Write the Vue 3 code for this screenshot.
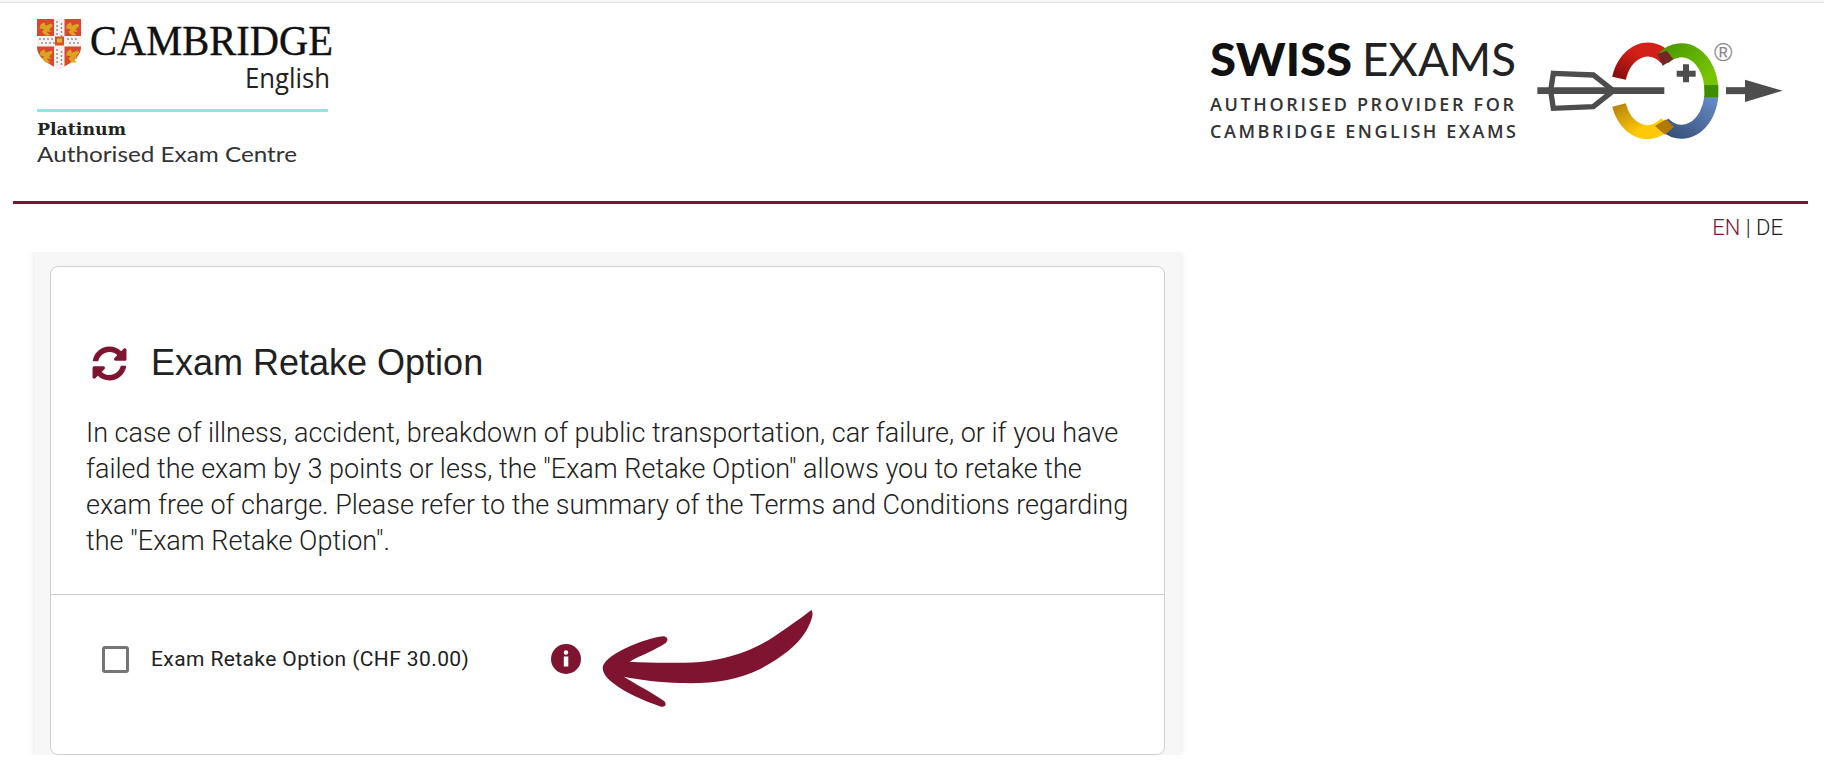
<script setup>
const refreshPath = "M370.72 133.28C339.458 104.008 298.888 87.962 255.848 88c-77.458.068-144.328 53.178-162.791 126.85-1.344 5.363-6.122 9.15-11.651 9.15H24.103c-7.498 0-13.194-6.807-11.807-14.176C33.933 94.924 134.813 8 256 8c66.448 0 126.791 26.136 171.315 68.685L463.03 40.97C478.149 25.851 504 36.559 504 57.941V192c0 13.255-10.745 24-24 24H345.941c-21.382 0-32.09-25.851-16.971-40.971l41.75-41.749zM32 296h134.059c21.382 0 32.09 25.851 16.971 40.971l-41.75 41.75c31.262 29.273 71.835 45.319 114.876 45.28 77.418-.07 144.315-53.144 162.787-126.849 1.344-5.363 6.122-9.15 11.651-9.15h57.304c7.498 0 13.194 6.807 11.807 14.176C478.067 417.076 377.187 504 256 504c-66.448 0-126.791-26.136-171.315-68.685L48.97 471.03C33.851 486.149 8 475.441 8 454.059V320c0-13.255 10.745-24 24-24z";
const lions = [[39.5, 21], [66, 21], [39.5, 48], [66, 48]];
const dots = [];
for (let y = 22; y < 64; y += 4) { if (y < 36 || y > 46) { dots.push([57, y]); dots.push([61.5, y + 2]); } }
for (let x = 40; x < 80; x += 4) { if (x < 54 || x > 64) { dots.push([x, 39]); dots.push([x + 2, 43]); } }
</script>

<template>
  <div class="page">
    <div class="topline"></div>
    <header class="header">
      <svg class="logo-left" viewBox="37 19 300 146" width="300" height="146">
        <path d="M37 19H81V47C81 58 68 65 59 69C50 65 37 58 37 47Z" fill="#d9482e" />
        <path d="M54 19H64.500V36H81V46.500H64.500V68L59 69L54 68V46.500H37V36H54Z" fill="#f4f1ee" />
        <circle v-for="(d, i) in dots" :key="i" :cx="d[0]" :cy="d[1]" r="0.9" fill="#8b8b8b" />
        <rect x="55" y="36.500" width="9" height="9" fill="#d7512b" />
        <rect x="57" y="38.500" width="5" height="4" fill="#e3b02a" />
        <g v-for="(l, i) in lions" :key="i" :transform="`translate(${l[0]} ${l[1]}) scale(1.2)`">
          <path d="M1 3L4 1L5 4L10 2L11 4L8 7L10 9L6 9L9 12L5 12L2 9L4 7L0 6Z" fill="#dba520" />
        </g>
        <text x="90" y="55" class="cam" textLength="243" lengthAdjust="spacingAndGlyphs">CAMBRIDGE</text>
        <text x="245" y="88" class="eng" textLength="85" lengthAdjust="spacingAndGlyphs">English</text>
        <rect x="37" y="109" width="291" height="3" fill="#8fe6e2" />
        <text x="37" y="135" class="plat" textLength="89" lengthAdjust="spacingAndGlyphs">Platinum</text>
        <text x="37" y="162" class="auth" textLength="260" lengthAdjust="spacingAndGlyphs">Authorised Exam Centre</text>
      </svg>
      <svg class="logo-right" viewBox="1210 40 580 105" width="580" height="105">
        <text x="1210" y="76" class="swiss" textLength="142" lengthAdjust="spacingAndGlyphs">SWISS</text>
        <text x="1362" y="76" class="exams" textLength="154" lengthAdjust="spacingAndGlyphs">EXAMS</text>
        <text x="1210" y="111" class="prov" textLength="304">AUTHORISED PROVIDER FOR</text>
        <text x="1210" y="138" class="prov" textLength="306">CAMBRIDGE ENGLISH EXAMS</text>
        <defs>
          <linearGradient id="gr" x1="0" y1="1" x2="1" y2="0"><stop offset="0" stop-color="#870e0e" /><stop offset="0.6" stop-color="#d21f17" /></linearGradient>
          <linearGradient id="gy" x1="0" y1="0" x2="1" y2="1"><stop offset="0" stop-color="#b9860f" /><stop offset="0.7" stop-color="#ffc905" /></linearGradient>
          <linearGradient id="gg" x1="0" y1="0" x2="1" y2="1"><stop offset="0" stop-color="#4c9b00" /><stop offset="0.8" stop-color="#77c502" /></linearGradient>
          <linearGradient id="gb" x1="1" y1="0" x2="0" y2="1"><stop offset="0" stop-color="#668ac5" /><stop offset="1" stop-color="#365078" /></linearGradient>
        </defs>
        <g transform="translate(1520 30) scale(0.33333)" fill="none">
          <path d="M297 145A90 121 0 0 1 439 85" stroke="url(#gr)" stroke-width="42" />
          <path d="M430 85A90 121 0 0 1 574 182" stroke="url(#gg)" stroke-width="42" />
          <path d="M297 225A90 121 0 0 0 439 279" stroke="url(#gy)" stroke-width="42" />
          <path d="M574 200A90 121 0 0 1 430 280" stroke="url(#gb)" stroke-width="42" />
          <path d="M412 73L440 62L460 88L428 107Z" fill="#742528" />
          <path d="M405 288L438 268L462 290L435 314Z" fill="#b27a04" />
          <rect x="553" y="165" width="42" height="37" fill="#3f8c00" />
          <path d="M100 130L220 135L280 182L220 230L100 235L92 182Z" stroke="#4d4d4d" stroke-width="16" />
          <path d="M52 182H433" stroke="#4d4d4d" stroke-width="20" />
          <path d="M470 131H527M498 103V157" stroke="#4d4d4d" stroke-width="18" />
          <path d="M618 182H690" stroke="#4d4d4d" stroke-width="21" />
          <path d="M675 149L788 182L675 216Z" fill="#4d4d4d" />
        </g>
        <text x="1714" y="61" class="reg">®</text>
      </svg>
    </header>
    <div class="rule"></div>
    <nav class="lang"><span class="active">EN</span> | DE</nav>
    <main class="panel">
      <section class="card">
        <div class="intro">
          <h2 class="title">
            <svg class="sync" viewBox="0 0 512 512" width="35" height="35"><path :d="refreshPath" fill="#7f1431" /></svg>
            <span>Exam Retake Option</span>
          </h2>
          <p class="desc">In case of illness, accident, breakdown of public transportation, car failure, or if you have failed the exam by 3 points or less, the "Exam Retake Option" allows you to retake the exam free of charge. Please refer to the summary of the Terms and Conditions regarding the "Exam Retake Option".</p>
        </div>
        <div class="option">
          <span class="check"></span>
          <span class="label">Exam Retake Option (CHF 30.00)</span>
          <span class="info-wrap">
            <svg class="info" viewBox="0 0 30 30" width="30" height="30">
              <circle cx="15" cy="15" r="15" fill="#7f1431" />
              <circle cx="15" cy="8.500" r="2.200" fill="#fff" />
              <rect x="12.800" y="12.500" width="4.500" height="10" fill="#fff" />
            </svg>
            <svg class="arrow" viewBox="200 10 660 320" width="220" height="106.670">
              <path d="M843 28C850 35 848 55 825 95C800 135 755 170 690 205C620 240 540 250 450 247C390 245 330 238 280 228C315 250 370 278 402 302C410 312 405 320 392 318C340 300 290 280 245 245C225 228 214 212 218 195C225 178 255 155 300 136C335 122 370 110 398 107C412 108 416 118 405 128C375 148 330 165 298 183C360 187 440 188 510 184C590 176 670 150 735 105C780 75 815 50 843 28Z" fill="#7f1431" />
            </svg>
          </span>
        </div>
      </section>
    </main>
  </div>
</template>

<style scoped>
.page {
  height: 767px;
  overflow: hidden;
  font-family: Roboto, "Liberation Sans", sans-serif;
  color: #212121;
  background: #fff;
}
.topline {
  height: 3px;
  background: linear-gradient(#f6f6f6 66%, #dedede 66%);
}
.header {
  height: 198px;
  box-sizing: border-box;
  padding: 16px 34px 0 37px;
  display: flex;
  justify-content: space-between;
  align-items: flex-start;
}
.logo-left, .logo-right { display: block; }
.logo-right { margin-top: 21px; }
.cam { font: 400 43px "Liberation Serif", serif; fill: #111; stroke: #111; stroke-width: 0.4px; }
.eng { font: 400 27px "Open Sans", sans-serif; fill: #222; }
.plat { font: 700 16px "DejaVu Serif", serif; fill: #222; }
.auth { font: 400 22px Lato, sans-serif; fill: #333; }
.swiss { font: 900 46px Lato, sans-serif; fill: #111; }
.exams { font: 400 46px Lato, sans-serif; fill: #222; }
.prov { font: 600 18px "Open Sans", sans-serif; fill: #333; }
.reg { font: 400 25px "Liberation Sans", sans-serif; fill: #888; }
.rule {
  height: 3px;
  margin: 0 16px 0 13px;
  background: #7f1431;
}
.lang {
  height: 48px;
  box-sizing: border-box;
  padding: 12px 41px 0 0;
  text-align: right;
  font-size: 22px;
  font-weight: 300;
  line-height: 24px;
}
.active { color: #7f1431; }
.panel {
  width: 1145px;
  margin-left: 35px;
  padding: 14px 15px 0;
  box-sizing: border-box;
  background: #f7f7f7;
  box-shadow: 0 0 8px rgba(0, 0, 0, 0.12);
  clip-path: inset(0 -8px 0 -8px);
}
.card {
  width: 1115px;
  height: 489px;
  box-sizing: border-box;
  background: #fff;
  border: 1px solid #cfcfcf;
  border-radius: 8px;
}
.intro {
  height: 328px;
  box-sizing: border-box;
  padding: 77px 30px 0 35px;
  border-bottom: 1px solid #cfcfcf;
}
.title {
  display: flex;
  align-items: center;
  gap: 24px;
  margin: 0 0 33px 6px;
  font: 400 36px/38px "Liberation Sans", sans-serif;
  color: #212121;
}
.sync { display: block; }
.desc {
  margin: 0;
  font-size: 27px;
  font-weight: 300;
  line-height: 36px;
}
.option {
  display: flex;
  align-items: center;
  height: 128px;
  padding-left: 51px;
}
.check {
  width: 27px;
  height: 27px;
  box-sizing: border-box;
  border: 3px solid #757575;
  border-radius: 3px;
  flex: none;
}
.label {
  margin-left: 22px;
  width: 400px;
  font-size: 21px;
  letter-spacing: 0.4px;
}
.info-wrap {
  position: relative;
  display: block;
  width: 30px;
  height: 30px;
}
.info { display: block; }
.arrow {
  position: absolute;
  left: 46px;
  top: -40px;
}
</style>

<style>
html, body { margin: 0; overflow: hidden; }
</style>
